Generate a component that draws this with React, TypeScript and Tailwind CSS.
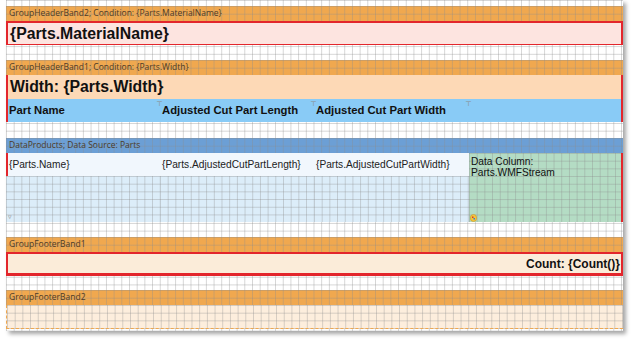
import React from 'react'

// grid lines drawn on top of each band colour
const grid =
  'bg-[linear-gradient(to_right,rgba(140,140,140,0.36)_1px,transparent_1px),linear-gradient(to_bottom,rgba(140,140,140,0.36)_1px,transparent_1px)] bg-[size:7.7px_7.7px]'

const caption = "font-['Open_Sans',sans-serif] text-[8.5px] text-[#4b3a28] leading-none pl-[3px]"

function Band({ children }: { children: React.ReactNode }) {
  return <div className={`h-[15px] flex items-center bg-[#f0a84f] ${grid} ${caption}`}>{children}</div>
}

function Tick() {
  return <span className="absolute -top-[1px] -left-[3px] text-[7px] leading-none text-[#8a8a8a]">┬</span>
}

export default function App() {
  return (
    <main className="w-[636px] h-[343px] bg-white overflow-hidden font-['Liberation_Sans',Arial,sans-serif]">
      <div className={`ml-[6px] w-[617px] h-[331px] bg-white ${grid} shadow-[3px_3px_4px_rgba(0,0,0,0.35)] flex flex-col`}>
        <div className="h-[6px]" />

        <Band>GroupHeaderBand2; Condition: {'{Parts.MaterialName}'}</Band>
        <div className="h-[24px] bg-[#fde4e0] border-2 border-[#e3262c] border-b-[1px] flex items-center pl-[2px]">
          <span className="font-bold text-[15.8px] text-[#111]">{'{Parts.MaterialName}'}</span>
        </div>

        <div className="h-[15px]" />

        <Band>GroupHeaderBand1; Condition: {'{Parts.Width}'}</Band>
        <div className="border-x-2 border-[#e3262c]">
          <div className="h-[24px] bg-[#fdd9b6] flex items-center pl-[2px]">
            <span className="font-bold text-[15.8px] text-[#111]">Width: {'{Parts.Width}'}</span>
          </div>
          <div className="h-[23px] bg-[#89cbf6] grid grid-cols-[152px_154px_155px_1fr] text-[11.3px] font-bold text-[#111]">
            <div className="flex items-center pl-[1px]">Part Name</div>
            <div className="relative flex items-center pl-[2px]"><Tick />Adjusted Cut Part Length</div>
            <div className="relative flex items-center pl-[2px]"><Tick />Adjusted Cut Part Width</div>
            <div className="relative"><Tick /></div>
          </div>
        </div>

        <div className="h-[16px]" />

        <div className={`h-[15px] flex items-center bg-[#6c9fd5] ${grid} ${caption} text-[#1d2c40]`}>DataProducts; Data Source: Parts</div>
        <div className="h-[69px] grid grid-cols-[154px_154px_155px_1fr] border-r-2 border-[#e3262c]">
          <div className="flex flex-col">
            <div className="h-[23px] bg-[#f1f7fd] border-l-2 border-[#e3262c] text-[10.2px] text-[#222] flex items-center pl-[1px]">{'{Parts.Name}'}</div>
            <div className={`flex-1 bg-[#dcedf9] ${grid} relative`}>
              <span className="absolute left-[2px] top-[37px] text-[7px] leading-none text-[#888]">▿</span>
            </div>
          </div>
          <div className="flex flex-col">
            <div className="h-[23px] bg-[#f1f7fd] text-[10.2px] text-[#222] flex items-center pl-[2px]">{'{Parts.AdjustedCutPartLength}'}</div>
            <div className={`flex-1 bg-[#dcedf9] ${grid}`} />
          </div>
          <div className="flex flex-col">
            <div className="h-[23px] bg-[#f1f7fd] text-[10.2px] text-[#222] flex items-center pl-[2px]">{'{Parts.AdjustedCutPartWidth}'}</div>
            <div className={`flex-1 bg-[#dcedf9] ${grid}`} />
          </div>
          <div className={`bg-[#b4dcc4] ${grid} relative text-[10.2px] leading-[11px] text-[#111] pl-[2px] pt-[3px]`}>
            Data Column:
            <br />
            Parts.WMFStream
            <svg className="absolute left-[1px] bottom-[0px]" width="7" height="8" viewBox="0 0 7 8">
              <ellipse cx="3.5" cy="4" rx="3.2" ry="3.6" fill="#f3c73a" stroke="#c9962a" strokeWidth="0.6" />
              <rect x="2" y="2.5" width="1.5" height="1.5" fill="#d8392b" />
              <rect x="3.5" y="4" width="1.5" height="1.5" fill="#3a7bd5" />
            </svg>
          </div>
        </div>

        <div className="h-[15px]" />

        <Band>GroupFooterBand1</Band>
        <div className="h-[24px] bg-[#fbecd9] border-2 border-[#e3262c] border-b-[3px] flex items-center justify-end pr-[1px]">
          <span className="font-bold text-[12px] text-[#111]">Count: {'{Count()}'}</span>
        </div>

        <div className="h-[14px]" />

        <Band>GroupFooterBand2</Band>
        <div className={`h-[24px] bg-[#fdeedd] ${grid} border-l border-b border-dashed border-[#f0a84f]`} />
      </div>
    </main>
  )
}
